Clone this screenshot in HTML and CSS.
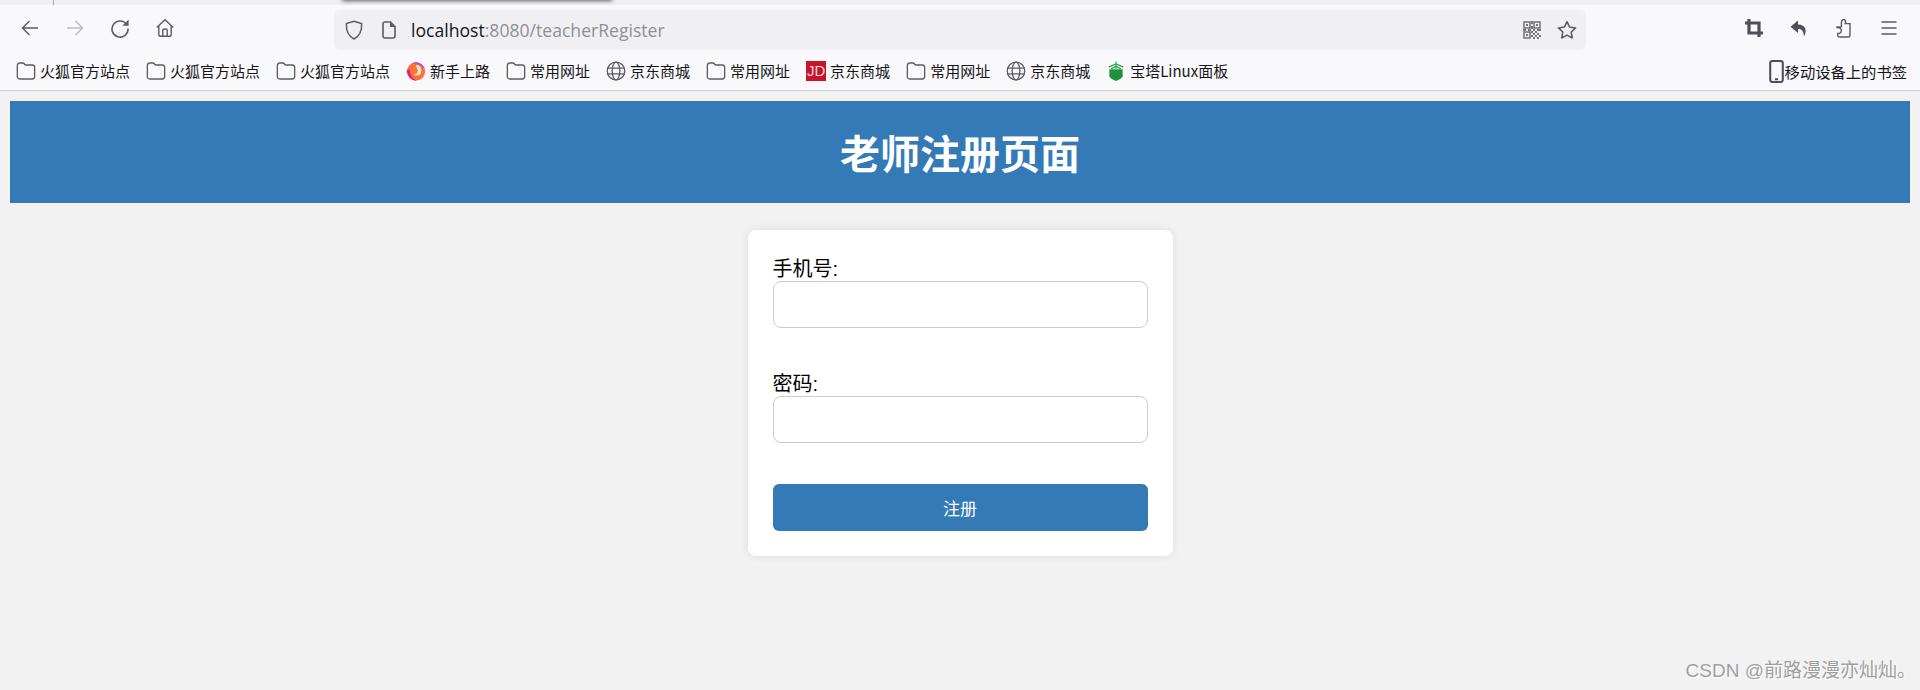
FILE: index.html
```html
<!DOCTYPE html>
<html lang="zh-CN">
<head>
  <meta charset="UTF-8">
  <meta name="viewport" content="width=device-width, initial-scale=1.0">
  <title>老师注册页面</title>
  <link rel="stylesheet" href="styles.css">
</head>
<body>
  <svg class="sprites" width="0" height="0">
    <symbol id="folder" viewBox="0 0 18 18">
      <path d="M1.2 4C1.2 2.6 2 1.8 3.4 1.8H6.4C7.4 1.8 7.8 3.6 8.8 3.6H14.6C16 3.6 16.8 4.4 16.8 5.8V14C16.8 15.4 16 16.2 14.6 16.2H3.4C2 16.2 1.2 15.4 1.2 14Z" fill="none" stroke="#5b5b66" stroke-width="1.2"/>
    </symbol>
    <symbol id="globe" viewBox="0 0 20 20">
      <g fill="none" stroke="#5b5b66" stroke-width="1.3">
        <circle cx="10" cy="10" r="8.8"/>
        <ellipse cx="10" cy="10" rx="3.8" ry="8.8"/>
        <path d="M1.4 7.2H18.6M1.4 12.8H18.6"/>
      </g>
    </symbol>
  </svg>

  <!-- 浏览器工具栏 -->
  <div class="browser-top">
    <span class="tab-divider"></span>
    <span class="tab-shadow"></span>
  </div>
  <div class="toolbar">
    <div class="nav-icons">
      <svg class="icon" viewBox="0 0 20 20"><path d="M18 10H2.5M9.5 3L2.5 10L9.5 17" fill="none" stroke="#5b5b66" stroke-width="1.5"/></svg>
      <svg class="icon" viewBox="0 0 20 20"><path d="M2 10H17.5M10.5 3L17.5 10L10.5 17" fill="none" stroke="#bdbdc3" stroke-width="1.5"/></svg>
      <svg class="icon" viewBox="0 0 20 20"><path d="M16.6 6.5A8 8 0 1 0 18 10.5" fill="none" stroke="#5b5b66" stroke-width="1.6"/><path d="M18.6 1.6V7.8H12.4Z" fill="#5b5b66"/></svg>
      <svg class="icon" viewBox="0 0 20 20"><path d="M1.8 9.6L10 1.8L18.2 9.6M3.8 8V16.4C3.8 17.6 4.4 18.2 5.6 18.2H14.4C15.6 18.2 16.2 17.6 16.2 16.4V8M7.8 18V12.6C7.8 11.6 8.4 11 9.4 11H10.6C11.6 11 12.2 11.6 12.2 12.6V18" fill="none" stroke="#5b5b66" stroke-width="1.4"/></svg>
    </div>
    <div class="address-bar">
      <svg class="icon shield" viewBox="0 0 20 20"><path d="M10 1.2L17.6 3.6C18 9.6 16.6 15.4 10 19C3.4 15.4 2 9.6 2.4 3.6Z" fill="none" stroke="#5b5b66" stroke-width="1.5"/></svg>
      <svg class="icon page" viewBox="0 0 16 18"><path d="M2 3C2 1.8 2.8 1 4 1H9.5L14 5.5V15C14 16.2 13.2 17 12 17H4C2.8 17 2 16.2 2 15Z" fill="none" stroke="#5b5b66" stroke-width="1.6"/><path d="M9 1V6H14Z" fill="#5b5b66"/></svg>
      <span class="url">localhost<span class="url-rest">:8080/teacherRegister</span></span>
      <svg class="icon qr" viewBox="0 0 18 18">
        <g fill="none" stroke="#66666f" stroke-width="1.4"><rect x="1" y="1" width="6" height="6"/><rect x="11" y="1" width="6" height="6"/><rect x="1" y="11" width="6" height="6"/></g>
        <g fill="#77777f"><rect x="3" y="3" width="2" height="2"/><rect x="13" y="3" width="2" height="2"/><rect x="3" y="13" width="2" height="2"/><rect x="8" y="0" width="2" height="3"/><rect x="8" y="5" width="2" height="3"/><rect x="0" y="8" width="3" height="2"/><rect x="5" y="8" width="3" height="2"/><rect x="10" y="8" width="2" height="2"/><rect x="14" y="8" width="4" height="2"/><rect x="8" y="10" width="2" height="2"/><rect x="12" y="10" width="2" height="2"/><rect x="10" y="12" width="2" height="2"/><rect x="14" y="12" width="2" height="2"/><rect x="8" y="14" width="2" height="2"/><rect x="12" y="14" width="2" height="2"/><rect x="16" y="14" width="2" height="2"/><rect x="10" y="16" width="2" height="2"/><rect x="14" y="16" width="2" height="2"/></g>
      </svg>
      <svg class="icon star" viewBox="0 0 20 20"><path d="M10 1.6L12.6 7.1L18.6 7.9L14.2 12L15.3 18L10 15.1L4.7 18L5.8 12L1.4 7.9L7.4 7.1Z" fill="none" stroke="#5b5b66" stroke-width="1.5" stroke-linejoin="round"/></svg>
    </div>
    <div class="tool-icons">
      <svg class="icon" viewBox="0 0 20 20"><path d="M5 1V15H19M1 5H15V19" fill="none" stroke="#4f4f59" stroke-width="3.2"/></svg>
      <svg class="icon" viewBox="0 0 20 20"><path d="M9 2.5L1.5 8.8L9 15V11C12.5 11 14.5 12.6 15 18.5C18.2 13 17.2 6.6 9 6.4Z" fill="#4f4f59"/></svg>
      <svg class="icon" viewBox="0 0 20 20"><path d="M3 9H6.8C7.4 9 7.6 8.4 7.4 8V4.4C7.4 3.2 8 2.4 9 1.6H10.4C11.8 2.6 11.8 4.4 11.2 5.6H16V17.4C16 18.4 15.4 19 14.4 19H5.4C4.4 19 3.8 18.4 3.8 17.4V15.4C6 15.4 7.4 14.4 7.4 12.4C7.4 10.6 5.6 9.6 3 9.6Z" fill="none" stroke="#5b5b66" stroke-width="1.4"/></svg>
      <svg class="icon" viewBox="0 0 20 20"><path d="M2.5 4H17.5M2.5 10H17.5M2.5 16H17.5" fill="none" stroke="#5b5b66" stroke-width="1.4"/></svg>
    </div>
  </div>

  <!-- 书签栏 -->
  <div class="bookmarks">
    <div class="bookmark-list">
      <a class="bookmark"><svg class="mark"><use href="#folder"/></svg>火狐官方站点</a>
      <a class="bookmark"><svg class="mark"><use href="#folder"/></svg>火狐官方站点</a>
      <a class="bookmark"><svg class="mark"><use href="#folder"/></svg>火狐官方站点</a>
      <a class="bookmark">
        <svg class="mark" viewBox="0 0 18 18">
          <circle cx="9" cy="9.4" r="8.2" fill="#ff7139"/>
          <path d="M5 2.4C9 -.4 15.8 1.6 17.2 8.4C15.6 4.6 10 1.6 5 2.4Z" fill="#9059ff"/>
          <path d="M.9 8C.9 13 4.6 17.6 9.6 17.6C5.6 16 3.4 12.4 3.4 7.6Z" fill="#e31587"/>
          <path d="M9.4 3.6C13.6 3.8 14.6 8.4 13.2 11C12 13.4 8.4 13.6 6.8 11.6C9 12 11 10.8 10.6 8.5C10.3 6.6 8.8 5.4 9.4 3.6Z" fill="#ffe9c9"/>
        </svg>新手上路</a>
      <a class="bookmark"><svg class="mark"><use href="#folder"/></svg>常用网址</a>
      <a class="bookmark"><svg class="mark"><use href="#globe"/></svg>京东商城</a>
      <a class="bookmark"><svg class="mark"><use href="#folder"/></svg>常用网址</a>
      <a class="bookmark"><span class="jd-logo">JD</span>京东商城</a>
      <a class="bookmark"><svg class="mark"><use href="#folder"/></svg>常用网址</a>
      <a class="bookmark"><svg class="mark"><use href="#globe"/></svg>京东商城</a>
      <a class="bookmark">
        <svg class="mark" viewBox="0 0 18 18">
          <path d="M3 7.5H15V13.5C15 15.5 11 17.2 9 18C7 17.2 3 15.5 3 13.5Z" fill="#20933a"/>
          <path d="M9 .5V7M2.5 5.5L9 2.5L15.5 5.5M4.5 7L9 4.8L13.5 7" fill="none" stroke="#3fa35a" stroke-width="1.2"/>
        </svg>宝塔Linux面板</a>
    </div>
    <a class="bookmark mobile">
      <svg class="phone" viewBox="0 0 14 22"><rect x="1" y="1" width="12" height="20" rx="2" fill="none" stroke="#4f4f59" stroke-width="2"/><rect x="5.5" y="17.4" width="3" height="2" fill="#4f4f59"/></svg>移动设备上的书签</a>
  </div>

  <!-- 页面内容 -->
  <main class="page-body">
    <header class="page-header">
      <h1>老师注册页面</h1>
    </header>

    <form class="register-card">
      <div class="form-group">
        <label for="phone">手机号:</label>
        <input id="phone" type="text">
      </div>
      <div class="form-group last">
        <label for="password">密码:</label>
        <input id="password" type="password">
      </div>
      <button type="button" class="submit-btn">注册</button>
    </form>
  </main>

  <div class="watermark">CSDN @前路漫漫亦灿灿。</div>
</body>
</html>
```

FILE: styles.css
```css
* {
    box-sizing: border-box;
}

html, body {
    height: 690px;
    overflow: hidden;
}

body {
    margin: 0;
    position: relative;
    background: #f2f2f2;
    color: #000;
    font-family: "Liberation Sans", "Noto Sans CJK SC", sans-serif;
}

.sprites {
    position: absolute;
}

.icon {
    display: block;
    width: 20px;
    height: 20px;
}

/* 浏览器顶部 */
.browser-top {
    position: relative;
    height: 5px;
    background: #f0f0f4;
    overflow: hidden;
}

.tab-divider {
    position: absolute;
    left: 53px;
    top: 0;
    width: 1px;
    height: 5px;
    background: #a9a9ae;
}

.tab-shadow {
    position: absolute;
    left: 342px;
    top: -6px;
    width: 270px;
    height: 6px;
    box-shadow: 0 1px 4px rgba(0, 0, 0, 0.6);
}

.toolbar {
    display: flex;
    align-items: center;
    height: 45px;
    background: #f9f9fb;
}

.nav-icons {
    display: flex;
    align-items: center;
    gap: 25px;
    padding-left: 20px;
    width: 334px;
}

.address-bar {
    display: flex;
    align-items: center;
    width: 1252px;
    height: 40px;
    margin-top: 5px;
    padding: 0 9px 0 10px;
    background: #f0f0f4;
    border-radius: 6px;
}

.shield {
    margin-right: 17px;
}

.page {
    width: 16px;
    height: 18px;
    margin-right: 14px;
}

.url {
    flex: 1;
    font-family: "Open Sans", "Noto Sans", sans-serif;
    font-size: 17.6px;
    color: #15141a;
}

.url-rest {
    color: #8f8f96;
}

.qr {
    width: 18px;
    height: 18px;
    margin-right: 16px;
}

.tool-icons {
    display: flex;
    align-items: center;
    gap: 25px;
    padding-left: 158px;
}

/* 书签栏 */
.bookmarks {
    display: flex;
    justify-content: space-between;
    align-items: center;
    height: 41px;
    padding: 2px 13px 0 16px;
    background: #f9f9fb;
    border-bottom: 1px solid #cfcfd2;
}

.bookmark-list {
    display: flex;
    align-items: center;
    gap: 16px;
}

.bookmark {
    display: flex;
    align-items: center;
    gap: 6px;
    font-family: "Noto Sans CJK SC", sans-serif;
    font-size: 15px;
    line-height: 20px;
    color: #15141a;
    white-space: nowrap;
}

.mark {
    width: 20px;
    height: 20px;
    flex: none;
    margin-right: -2px;
}

.jd-logo {
    width: 20px;
    height: 20px;
    margin-right: -2px;
    background: #c8142a;
    color: #f6d9d9;
    font-family: "Liberation Sans", sans-serif;
    font-size: 15px;
    line-height: 20px;
    text-align: center;
}

.mobile {
    gap: 1px;
    font-size: 15.3px;
}

.phone {
    width: 15px;
    height: 23px;
}

/* 页面内容 */
.page-body {
    padding: 10px 10px 0;
}

.page-header {
    height: 102px;
    background: #337ab7;
    color: #fff;
    display: flex;
    align-items: center;
    justify-content: center;
}

.page-header h1 {
    margin: 0;
    font-size: 40px;
    font-weight: bold;
}

.register-card {
    width: 425px;
    margin: 27px auto 0;
    padding: 25px;
    background: #fff;
    border-radius: 8px;
    box-shadow: 0 0 10px rgba(0, 0, 0, 0.1);
}

.form-group {
    margin-bottom: 42px;
}

.form-group.last {
    margin-bottom: 41px;
}

.form-group label {
    display: block;
    height: 26px;
    font-size: 20px;
    line-height: 28px;
}

.form-group input {
    display: block;
    width: 100%;
    height: 47px;
    border: 1px solid #ccc;
    border-radius: 8px;
    background: #fff;
}

.submit-btn {
    display: block;
    width: 100%;
    height: 47px;
    border: none;
    border-radius: 6px;
    background: #337ab7;
    color: #fff;
    font-family: "Noto Sans CJK SC", sans-serif;
    font-size: 17px;
}

.watermark {
    position: absolute;
    right: 4px;
    bottom: 7px;
    font-size: 19px;
    line-height: 24px;
    color: #9f9f9f;
    text-shadow: 1px 1px 1px #fff;
}
```
